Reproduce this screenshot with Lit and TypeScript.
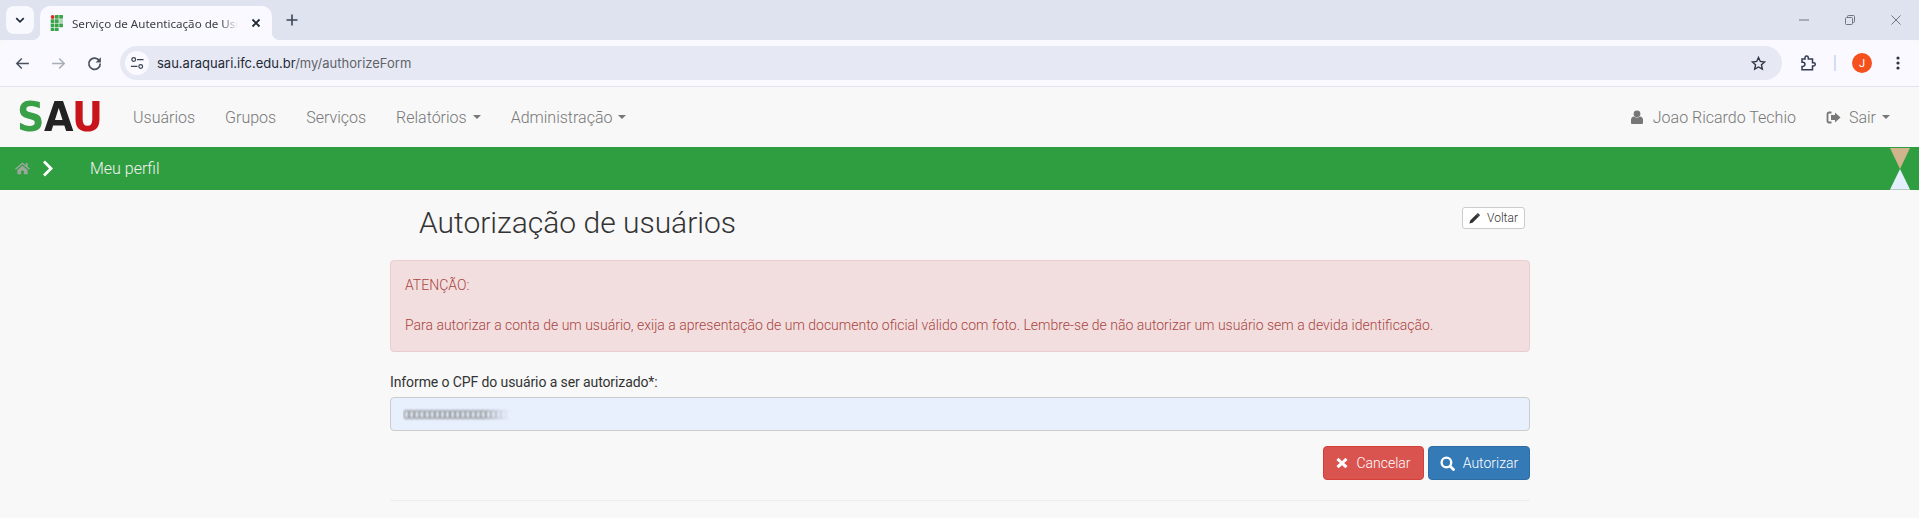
import { LitElement, html, css, svg } from "lit";
import { customElement } from "lit/decorators.js";

const ic = (d: unknown, size = 24, vb = "0 0 24 24", cls = "", h = size) =>
  html`<svg class="${cls}" width="${size}" height="${h}" viewBox="${vb}">${d}</svg>`;

@customElement("app-root")
export class AppRoot extends LitElement {
  static styles = css`
    :host { display: block; height: 518px; overflow: hidden; background: #f8f8f8; font-family: Roboto, "Liberation Sans", sans-serif; }
    svg { display: block; flex: none; }
    .tabstrip { height: 40px; background: #dfe3f0; display: flex; align-items: flex-start; padding-left: 6px; }
    .tabmenu { width: 28px; height: 28px; margin-top: 6px; border-radius: 8px; background: #f8f9fe; display: flex; align-items: center; justify-content: center; }
    .tab { position: relative; width: 232px; height: 34px; margin: 6px 0 0 6px; background: #f9f9ff; border-radius: 10px 10px 0 0; display: flex; align-items: center; padding: 0 0 0 9px; box-sizing: border-box; color: #3c4043; }
    .tab::before, .tab::after { content: ""; position: absolute; bottom: 0; width: 8px; height: 8px; }
    .tab::before { left: -8px; background: radial-gradient(circle at 0 0, transparent 8px, #f9f9ff 8.5px); }
    .tab::after { right: -8px; background: radial-gradient(circle at 100% 0, transparent 8px, #f9f9ff 8.5px); }
    .tabtitle { margin-left: 7px; width: 166px; white-space: nowrap; overflow: hidden; -webkit-mask-image: linear-gradient(90deg, #000 90%, transparent); mask-image: linear-gradient(90deg, #000 90%, transparent); font: 400 11.6px "Noto Sans", "Open Sans", sans-serif; }
    .tabclose { margin-left: 10px; }
    .plus { margin: 12px 0 0 12px; }
    .winctl { margin-left: auto; display: flex; }
    .winbtn { width: 46px; height: 40px; display: flex; align-items: center; justify-content: center; }
    .toolbar { height: 46px; background: #f9f9ff; border-radius: 10px 10px 0 0; display: flex; align-items: center; border-bottom: 1px solid #e1e3ee; padding-left: 4px; }
    .navbtn { width: 36px; height: 36px; display: flex; align-items: center; justify-content: center; }
    .omni { margin-left: 8px; width: 1662px; height: 34px; border-radius: 17px; background: #e6e9f4; display: flex; align-items: center; box-sizing: border-box; padding: 0 0 0 5px; font: 400 13px Inter, "Noto Sans", sans-serif; color: #5f6368; flex: none; }
    .tune { width: 24px; height: 24px; border-radius: 50%; background: #f9f9ff; display: flex; align-items: center; justify-content: center; margin-right: 8px; }
    .omni b { font-weight: 400; color: #1f2937; }
    .star { margin-left: auto; margin-right: 15px; }
    .ext { margin-left: 17px; }
    .sep { width: 2px; height: 16px; background: #d3def2; margin: 0 16px 0 17px; }
    .avatar { width: 20px; height: 20px; border-radius: 50%; background: #f4511e; color: #fff; font: 400 11px Roboto, sans-serif; display: flex; align-items: center; justify-content: center; }
    .more { margin-left: 18px; }

    .navbar { height: 60px; background: #f8f8f8; display: flex; align-items: center; padding: 0 15px 0 17px; color: #777; font-size: 16px; font-weight: 300; }
    .logo { font: 700 41px/60px "DejaVu Sans", "Liberation Sans", sans-serif; width: 101px; white-space: nowrap; transform: scaleX(0.93); transform-origin: left center; letter-spacing: -0.5px; }
    .s { color: #39a048; } .a { color: #222; } .u { color: #c8141b; }
    .navlink { margin-right: 30px; white-space: nowrap; display: flex; align-items: center; }
    .caret { width: 0; height: 0; margin-left: 6px; border-top: 4px solid #777; border-left: 4px solid transparent; border-right: 4px solid transparent; }
    .right { margin-left: auto; display: flex; align-items: center; }
    .user { display: flex; align-items: center; gap: 10px; margin-right: 30px; }
    .out { display: flex; align-items: center; gap: 8px; margin-right: 14px; }
    .sair { display: flex; align-items: center; }

    .crumb { height: 43px; background: #2f9e41; display: flex; align-items: center; padding-left: 15px; color: #f2f2f2; font-size: 16px; font-weight: 300; }
    .chev { margin-left: 12px; margin-right: 31px; }
    .hour { margin-left: auto; margin-right: 9px; align-self: flex-end; }

    .main { width: 1140px; margin-left: 390px; }
    .head { display: flex; align-items: flex-start; justify-content: space-between; height: 70px; }
    h1 { margin: 16px 0 0 29px; font-size: 30px; line-height: 33px; font-weight: 300; color: #333; }
    .back { margin: 17px 5px 0 0; height: 22px; width: 63px; box-sizing: border-box; border: 1px solid #ccc; border-radius: 3px; background: #fff; display: flex; align-items: center; justify-content: center; gap: 7px; font-size: 12px; font-weight: 300; color: #333; }
    .alert { height: 92px; box-sizing: border-box; background: #f2dede; border: 1px solid #ebccd1; border-radius: 4px; padding: 14px 14px; color: #a94442; font-size: 14px; font-weight: 300; line-height: 20px; }
    .alert p { margin: 0; }
    .alert p + p { margin-top: 20px; }
    label { display: block; margin-top: 20px; font-size: 14px; line-height: 20px; font-weight: 400; color: #333; letter-spacing: -0.1px; }
    .input { margin-top: 5px; height: 34px; box-sizing: border-box; background: #e8f0fe; border: 1px solid #ccc; border-radius: 4px; padding: 0 12px; display: flex; align-items: center; overflow: hidden; }
    .masked { font: 400 13px Roboto, sans-serif; letter-spacing: -2.2px; color: #777; filter: blur(0.8px); white-space: nowrap; -webkit-mask-image: linear-gradient(90deg, #000 75%, transparent); mask-image: linear-gradient(90deg, #000 75%, transparent); }
    .actions { display: flex; justify-content: flex-end; gap: 4px; margin-top: 15px; }
    .btn { height: 34px; box-sizing: border-box; border-radius: 4px; color: #fff; font-size: 14px; font-weight: 300; display: flex; align-items: center; justify-content: center; gap: 8px; border: 1px solid; }
    .danger { width: 101px; background: #d9534f; border-color: #d43f3a; }
    .primary { width: 102px; background: #337ab7; border-color: #2e6da4; }
    hr { margin: 20px 0 0; border: 0; border-top: 1px solid #eee; }
  `;

  render() {
    const g = "#3aa34a";
    return html`
      <div class="tabstrip">
        <div class="tabmenu">${ic(svg`<path d="M7 9.500l5 5 5-5" fill="none" stroke="#1f2937" stroke-width="2.200"/>`, 18)}</div>
        <div class="tab">
          ${ic(svg`<circle cx="2" cy="2" r="2" fill="#d9302a"/>
            <rect x="4.400" y="0" width="3.800" height="3.800" fill="${g}"/><rect x="8.800" y="0" width="3.800" height="3.800" fill="${g}"/>
            <rect x="0" y="4.400" width="3.800" height="3.800" fill="${g}"/><rect x="4.400" y="4.400" width="3.800" height="3.800" fill="${g}"/><rect x="8.800" y="4.400" width="3.800" height="3.800" fill="#a6d6ac"/>
            <rect x="0" y="8.800" width="3.800" height="3.800" fill="${g}"/><rect x="4.400" y="8.800" width="3.800" height="3.800" fill="${g}"/><rect x="8.800" y="8.800" width="3.800" height="3.800" fill="${g}"/>
            <rect x="0" y="13.200" width="3.800" height="3.300" fill="${g}"/><rect x="4.400" y="13.200" width="3.800" height="3.300" fill="${g}"/>`, 16, "0 0 13 16.500")}
          <span class="tabtitle">Serviço de Autenticação de Usuários</span>
          ${ic(svg`<path d="M4.500 4.500l7 7M11.500 4.500l-7 7" stroke="#1f2937" stroke-width="1.800" fill="none"/>`, 16, "0 0 16 16", "tabclose")}
        </div>
        ${ic(svg`<path d="M8 2.500v11M2.500 8h11" stroke="#3c4452" stroke-width="1.600" fill="none"/>`, 16, "0 0 16 16", "plus")}
        <div class="winctl">
          <div class="winbtn">${ic(svg`<path d="M0 5h10" stroke="#70757f" stroke-width="1"/>`, 10, "0 0 10 10")}</div>
          <div class="winbtn">${ic(svg`<rect x=".5" y="2.500" width="7" height="7" rx="1" fill="none" stroke="#70757f"/><path d="M2.500 2.500v-1a1 1 0 0 1 1-1h5a1 1 0 0 1 1 1v5a1 1 0 0 1-1 1h-1" fill="none" stroke="#70757f"/>`, 10, "0 0 10 10")}</div>
          <div class="winbtn">${ic(svg`<path d="M.5.5l9 9M9.500.5l-9 9" stroke="#70757f" stroke-width="1"/>`, 10, "0 0 10 10")}</div>
        </div>
      </div>
      <div class="toolbar">
        <div class="navbtn">${ic(svg`<path d="M21 12H4.500M11 5l-7 7 7 7" fill="none" stroke="#4a5260" stroke-width="2.200"/>`, 17)}</div>
        <div class="navbtn">${ic(svg`<path d="M3 12h16.500M13 5l7 7-7 7" fill="none" stroke="#a9adb6" stroke-width="2.200"/>`, 17)}</div>
        <div class="navbtn">${ic(svg`<path d="M19 8.500A8 8 0 1 0 20 12" fill="none" stroke="#4a5260" stroke-width="2.400"/><path d="M21 3v7.500h-7.500z" fill="#4a5260"/>`, 17)}</div>
        <div class="omni">
          <div class="tune">${ic(svg`<circle cx="4" cy="3.800" r="2" fill="none" stroke="#3c4452" stroke-width="1.300"/><path d="M7.500 3.800h7M1 11.200h7" stroke="#3c4452" stroke-width="1.300"/><circle cx="11.500" cy="11.200" r="2" fill="none" stroke="#3c4452" stroke-width="1.300"/>`, 14, "0 0 15 15")}</div>
          <span><b>sau.araquari.ifc.edu.br</b>/my/authorizeForm</span>
          ${ic(svg`<path d="M12 3.500l2.600 5.600 6 .7-4.400 4.100 1.200 6-5.400-3-5.400 3 1.200-6L3.400 9.800l6-.7z" fill="none" stroke="#2f3645" stroke-width="2"/>`, 17, "0 0 24 24", "star")}
        </div>
        ${ic(svg`<path d="M4 6.500h4V5a2.200 2.200 0 0 1 4.400 0v1.500h5.600v5h1.500a2.200 2.200 0 0 1 0 4.400H18V21H4v-4.500h1.200a2.700 2.700 0 0 0 0-5.400H4z" fill="none" stroke="#333c55" stroke-width="2"/>`, 18, "0 0 24 24", "ext")}
        <div class="sep"></div>
        <div class="avatar">J</div>
        ${ic(svg`<circle cx="8" cy="3" r="1.600" fill="#2f3645"/><circle cx="8" cy="8" r="1.600" fill="#2f3645"/><circle cx="8" cy="13" r="1.600" fill="#2f3645"/>`, 16, "0 0 16 16", "more")}
      </div>
      <div class="navbar">
        <div class="logo"><span class="s">S</span><span class="a">A</span><span class="u">U</span></div>
        <span class="navlink" style="margin-left:15px">Usuários</span>
        <span class="navlink">Grupos</span>
        <span class="navlink">Serviços</span>
        <span class="navlink">Relatórios<i class="caret"></i></span>
        <span class="navlink">Administração<i class="caret"></i></span>
        <div class="right">
          <span class="user">${ic(svg`<circle cx="6" cy="3.800" r="3.400" fill="#777"/><path d="M0 13V9.800C0 8 1.300 6.800 3 6.600c.8.700 1.900 1.100 3 1.100s2.200-.4 3-1.100c1.700.2 3 1.400 3 3.200V13a1 1 0 0 1-1 1H1a1 1 0 0 1-1-1z" fill="#777"/>`, 12, "0 0 12 14", "", 14)} Joao Ricardo Techio</span>
          <span class="out">${ic(svg`<path d="M5.500 2.500H3A1.500 1.500 0 0 0 1.500 4v7A1.500 1.500 0 0 0 3 12.500h2.500" fill="none" stroke="#777" stroke-width="1.800"/><path d="M9 2.500l5.500 5-5.500 5V10H5V5h4z" fill="#777"/>`, 15, "0 0 15 15")}<span class="sair">Sair<i class="caret"></i></span></span>
        </div>
      </div>
      <div class="crumb">
        ${ic(svg`<path d="M8 1.500L0 8.300l.9 1L8 3.400l7.100 5.900.9-1-2.500-2.100V2h-2v2.500zM2.500 9.500V14H6.500V10.500H9.500V14H13.500V9.500L8 5z" fill="#9aa89c"/>`, 15, "0 0 16 16")}
        ${ic(svg`<path d="M2 1.500l7 7-7 7" fill="none" stroke="#fff" stroke-width="2.800"/>`, 17, "0 0 17 17", "chev")}
        <span>Meu perfil</span>
        ${ic(svg`<path d="M0 0h20L10 21z" fill="#cfb48e"/><path d="M10 21l10 20.500H0z" fill="#e3effc"/><path d="M0 41h20v1H0z" fill="#b9c9c0"/>`, 20, "0 0 20 42", "hour", 42)}
      </div>
      <div class="main">
        <div class="head">
          <h1>Autorização de usuários</h1>
          <div class="back">${ic(svg`<path d="M9.500 1.500l3 3-8 8-4 1 1-4zM10.500.5a1 1 0 0 1 1.400 0l1.600 1.600a1 1 0 0 1 0 1.400l-.8.8-3-3z" fill="#333"/>`, 11, "0 0 14 14")} Voltar</div>
        </div>
        <div class="alert">
          <p>ATENÇÃO:</p>
          <p>Para autorizar a conta de um usuário, exija a apresentação de um documento oficial válido com foto. Lembre-se de não autorizar um usuário sem a devida identificação.</p>
        </div>
        <label>Informe o CPF do usuário a ser autorizado*:</label>
        <div class="input"><span class="masked">000000000000000000000</span></div>
        <div class="actions">
          <div class="btn danger">${ic(svg`<path d="M3 1l4 4 4-4 2.500 2.500-4 3.500 4 3.500L11 13 7 9.500 3 13 .5 10.500l4-3.500-4-3.500z" fill="#fff"/>`, 12, "0 0 14 14")} Cancelar</div>
          <div class="btn primary">${ic(svg`<circle cx="6" cy="6" r="4.500" fill="none" stroke="#fff" stroke-width="2.200"/><path d="M9.500 9.500l4 4" stroke="#fff" stroke-width="2.600"/>`, 15, "0 0 14 14")} Autorizar</div>
        </div>
        <hr />
      </div>
    `;
  }
}
